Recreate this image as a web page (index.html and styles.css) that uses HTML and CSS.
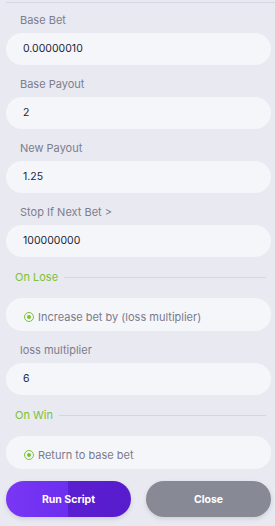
FILE: index.html
```html
<!DOCTYPE html>
<html>
<head>
<meta charset="utf-8">
<link rel="stylesheet" href="styles.css">
</head>
<body>
<div class="panel">
  <div class="topline"></div>
  <div class="label first">Base Bet</div>
  <div class="input">0.00000010</div>
  <div class="label">Base Payout</div>
  <div class="input">2</div>
  <div class="label">New Payout</div>
  <div class="input">1.25</div>
  <div class="label">Stop If Next Bet &gt;</div>
  <div class="input">100000000</div>
  <div class="heading"><span>On Lose</span><i></i></div>
  <div class="option"><span class="radio"></span>Increase bet by (loss multiplier)</div>
  <div class="label">loss multiplier</div>
  <div class="input">6</div>
  <div class="heading"><span>On Win</span><i></i></div>
  <div class="option"><span class="radio"></span>Return to base bet</div>
  <div class="buttons">
    <button class="btn run">Run Script</button>
    <button class="btn close">Close</button>
  </div>
</div>
</body>
</html>
```
FILE: styles.css
```css
html, body {
  margin: 0;
  padding: 0;
  background: #e9e9f1;
  font-family: Inter, "Noto Sans", sans-serif;
}
.panel {
  width: 275px;
  height: 526px;
  padding-left: 6px;
  box-sizing: border-box;
  display: flex;
  flex-direction: column;
}
.topline {
  height: 1px;
  margin-top: 2px;
  background: #d6d6e2;
}
.label {
  padding: 12px 0 6px 14px;
  line-height: 14px;
  font-size: 11px;
  color: #7d7d8c;
}
.label.first {
  padding-top: 10px;
}
.input {
  width: 265px;
  height: 32px;
  box-sizing: border-box;
  border-radius: 16px;
  background: #f5f6fa;
  padding-left: 17px;
  line-height: 32px;
  font-size: 10.5px;
  color: #232634;
}
.heading {
  display: flex;
  align-items: center;
  gap: 6px;
  margin: 13px 9px 14px 9px;
  height: 14px;
  font-size: 11px;
  color: #7bc232;
}
.heading i {
  flex: 1;
  height: 1px;
  background: #d6d6e2;
}
.option {
  width: 265px;
  height: 33px;
  box-sizing: border-box;
  border-radius: 16px;
  background: #f5f6fa;
  padding: 5px 0 0 18px;
  line-height: 14px;
  display: flex;
  align-items: center;
  align-self: flex-start;
  font-size: 11px;
  color: #7a7a8c;
}
.radio {
  width: 10px;
  height: 10px;
  box-sizing: border-box;
  border: 1.5px solid #7bc232;
  border-radius: 50%;
  margin-right: 4px;
  display: flex;
  align-items: center;
  justify-content: center;
}
.radio::after {
  content: "";
  width: 4px;
  height: 4px;
  border-radius: 50%;
  background: #7bc232;
}
.buttons {
  display: flex;
  gap: 15px;
  margin-top: 12px;
}
.btn {
  width: 125px;
  height: 36px;
  border: none;
  border-radius: 18px;
  color: #fff;
  font-family: Inter, sans-serif;
  font-weight: 700;
  font-size: 10.5px;
  box-shadow: 0 2px 4px rgba(60, 60, 90, 0.15);
}
.run {
  background: linear-gradient(90deg, #7a36f4 0%, #6c2ef0 50%, #5b1fd2 50%, #571ccc 100%);
}
.close {
  background: #878a95;
}
```
